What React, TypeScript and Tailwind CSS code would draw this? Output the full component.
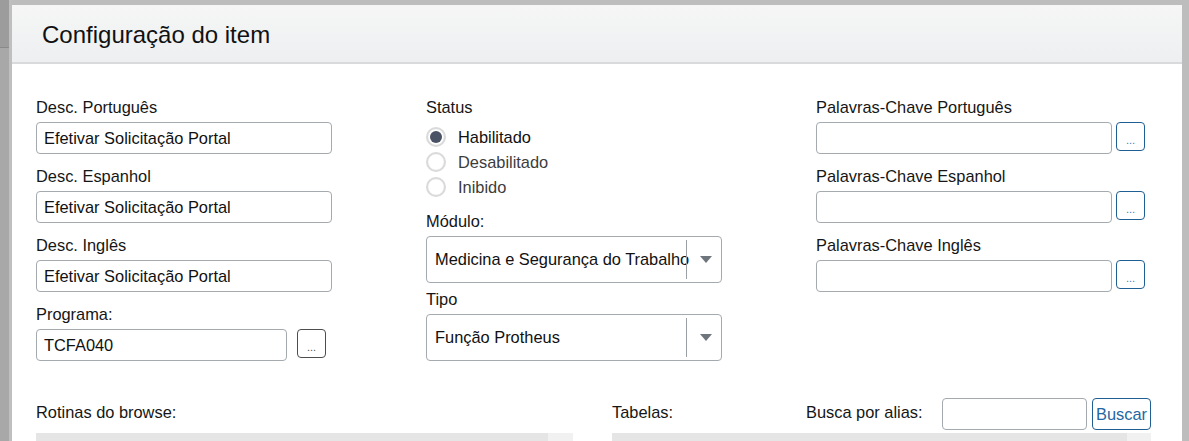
import React from "react";

const Label = ({ children }: { children: React.ReactNode }) => (
  <div className="h-[18px] text-[16.4px] leading-[18px] text-[#161616] whitespace-nowrap">{children}</div>
);

const TextInput = ({ value, w = "w-[296px]" }: { value?: string; w?: string }) => (
  <div
    className={`${w} shrink-0 h-[32px] rounded-[4px] border border-[#a4aaae] bg-white flex items-center pl-[7px] text-[16.4px] text-[#111] whitespace-nowrap overflow-hidden`}
  >
    {value}
  </div>
);

const DotsButton = ({ blue }: { blue?: boolean }) => (
  <div
    className={`w-[29px] h-[29px] shrink-0 rounded-[4px] bg-white flex items-center justify-center text-[11px] leading-[11px] pt-[7px] ${
      blue ? "border border-[#1f5f93] text-[#3b7db3]" : "border border-[#4d4d4d] text-[#555]"
    }`}
  >
    ...
  </div>
);

const Select = ({ value }: { value: string }) => (
  <div className="w-[296px] h-[47px] rounded-[4px] border border-[#a4aaae] bg-white flex items-stretch">
    <div className="flex-1 min-w-0 flex items-center pl-[8px] text-[16.4px] text-[#111] whitespace-nowrap">{value}</div>
    <div className="w-[35px] shrink-0 flex items-stretch">
      <div className="w-px my-[3px] bg-[#9aa0a4]" />
      <div className="flex-1 flex items-center justify-center pl-[4px]">
        <svg width="12" height="7" viewBox="0 0 12 7">
          <polygon points="0,0 12,0 6,7" fill="#6f757c" />
        </svg>
      </div>
    </div>
  </div>
);

const Radio = ({ label, checked }: { label: string; checked?: boolean }) => (
  <div className="h-[25px] shrink-0 flex items-center">
    <div className="w-[20px] h-[20px] rounded-full border-2 border-[#dadada] bg-white flex items-center justify-center shadow-[inset_0_0_1px_rgba(0,0,0,0.15)]">
      {checked && <div className="w-[12px] h-[12px] rounded-full bg-[#4a5265]" />}
    </div>
    <span className={`ml-[12px] text-[16.4px] leading-[18px] ${checked ? "text-[#111]" : "text-[#3c3c3c]"}`}>{label}</span>
  </div>
);

const Field = ({ label, value }: { label: string; value?: string }) => (
  <div className="flex flex-col shrink-0">
    <Label>{label}</Label>
    <div className="mt-[6px]">
      <TextInput value={value} />
    </div>
  </div>
);

const KeyField = ({ label }: { label: string }) => (
  <div className="flex flex-col shrink-0">
    <Label>{label}</Label>
    <div className="mt-[6px] flex items-start gap-[4px]">
      <TextInput />
      <DotsButton blue />
    </div>
  </div>
);

export default function App() {
  return (
    <div className="w-[1189px] h-[441px] overflow-hidden bg-[#bdbdbd] flex items-start font-['Liberation_Sans',Arial,sans-serif]">
      <div className="w-[9px] h-[441px] shrink-0 flex flex-col">
        <div className="h-[48px] bg-[#9c9c9c] border-b border-[#8a8a8a]" />
        <div className="flex-1 bg-[#a8a8a8]" />
      </div>
      <div className="w-[3px] h-[441px] shrink-0 bg-[#bfbfbf]" />
      <div className="w-[1170px] shrink-0 mt-[5px] bg-white flex flex-col">
        <div className="h-[59px] shrink-0 border-b-2 border-[#d9dadb] bg-gradient-to-b from-[#f5f6f5] to-[#eeeff1] pl-[30px] pt-[16px]">
          <div className="text-[24px] leading-[28px] text-[#111]">Configuração do item</div>
        </div>
        <div className="shrink-0 px-[24px] pt-[34px]">
          <div className="flex gap-[94px]">
            <div className="w-[296px] flex flex-col gap-[13px]">
              <Field label="Desc. Português" value="Efetivar Solicitação Portal" />
              <Field label="Desc. Espanhol" value="Efetivar Solicitação Portal" />
              <Field label="Desc. Inglês" value="Efetivar Solicitação Portal" />
              <div className="flex flex-col">
                <Label>Programa:</Label>
                <div className="mt-[6px] flex items-start gap-[10px]">
                  <TextInput value="TCFA040" w="w-[251px]" />
                  <DotsButton />
                </div>
              </div>
            </div>
            <div className="w-[296px] flex flex-col">
              <Label>Status</Label>
              <div className="mt-[8px] flex flex-col">
                <Radio label="Habilitado" checked />
                <Radio label="Desabilitado" />
                <Radio label="Inibido" />
              </div>
              <div className="mt-[13px]">
                <Label>Módulo:</Label>
              </div>
              <div className="mt-[6px]">
                <Select value="Medicina e Segurança do Trabalho" />
              </div>
              <div className="mt-[7px]">
                <Label>Tipo</Label>
              </div>
              <div className="mt-[6px]">
                <Select value="Função Protheus" />
              </div>
            </div>
            <div className="w-[329px] flex flex-col gap-[13px]">
              <KeyField label="Palavras-Chave Português" />
              <KeyField label="Palavras-Chave Espanhol" />
              <KeyField label="Palavras-Chave Inglês" />
            </div>
          </div>
          <div className="mt-[37px] flex gap-[39px]">
            <div className="w-[537px] flex flex-col">
              <div className="h-[32px] pt-[5px]">
                <Label>Rotinas do browse:</Label>
              </div>
              <div className="mt-[3px] h-[40px] flex">
                <div className="flex-1 bg-[#e5e5e5]" />
                <div className="w-[25px] bg-[#f1f1f1]" />
              </div>
            </div>
            <div className="w-[539px] flex flex-col">
              <div className="h-[32px] flex items-start">
                <div className="w-[194px] pt-[5px]">
                  <Label>Tabelas:</Label>
                </div>
                <div className="w-[136px] pt-[5px]">
                  <Label>Busca por alias:</Label>
                </div>
                <div className="w-[145px] h-[32px] rounded-[4px] border border-[#a4aaae] bg-white" />
                <div className="ml-[5px] w-[59px] h-[32px] rounded-[4px] border border-[#1f5f93] bg-white flex items-center justify-center text-[16.4px] text-[#2467a2]">
                  Buscar
                </div>
              </div>
              <div className="mt-[3px] h-[40px] flex">
                <div className="flex-1 bg-[#e5e5e5]" />
                <div className="w-[24px] bg-[#f1f1f1]" />
              </div>
            </div>
          </div>
        </div>
      </div>
      <div className="flex-1 h-[441px] bg-[#bdbdbd]" />
    </div>
  );
}
